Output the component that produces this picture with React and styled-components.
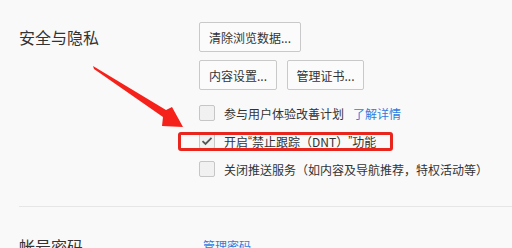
import React from "react";
import styled, { createGlobalStyle } from "styled-components";

const Global = createGlobalStyle`
  html, body {
    margin: 0;
    padding: 0;
    background: #f9f9f9;
    overflow: hidden;
  }
  body {
    font-family: "Noto Sans CJK SC", "Liberation Sans", sans-serif;
    color: #333;
  }
`;

const Page = styled.div`
  position: relative;
  width: 512px;
  height: 248px;
  overflow: hidden;
`;

const Section = styled.section`
  display: grid;
  grid-template-columns: 180px 1fr;
  margin-left: 19px;
  padding: ${(p) => p.$pad};
  border-bottom: ${(p) => (p.$divider ? "1px solid #e6e6e6" : "none")};
`;

const Title = styled.h3`
  margin: 0;
  font-size: 16px;
  font-weight: 400;
  line-height: 30px;
  color: #333;
`;

const Controls = styled.div`
  display: flex;
  flex-direction: column;
`;

const ButtonRow = styled.div`
  display: flex;
  gap: 10px;
  margin-bottom: 8px;
`;

const Button = styled.button`
  box-sizing: border-box;
  height: 30px;
  padding: 0;
  font-family: inherit;
  font-size: 12px;
  color: #333;
  white-space: nowrap;
  background: #fbfbfb;
  border: 1px solid #c9c9c9;
  border-radius: 2px;
  width: ${(p) => p.$w}px;
  text-align: center;
`;

const Options = styled.div`
  display: flex;
  flex-direction: column;
  margin-top: 1px;
`;

const Option = styled.label`
  position: relative;
  display: flex;
  align-items: center;
  height: 28px;
  font-size: 12px;
  color: #333;
  white-space: nowrap;
`;

const Box = styled.span`
  display: inline-flex;
  align-items: center;
  justify-content: center;
  width: 14px;
  height: 14px;
  border: 1px solid #c6c6c6;
  border-radius: 2px;
  background: #f1f1f1;
  margin-right: 9px;
`;

const Quote = styled.span`
  font-family: "Liberation Sans", sans-serif;
`;

const Link = styled.a`
  color: #2f7ce0;
  margin-left: 9px;
  text-decoration: none;
`;

const Highlight = styled.span`
  position: absolute;
  left: -21px;
  top: 5px;
  width: 209px;
  height: 13px;
  border: 3px solid #e8261d;
  border-radius: 3px;
  pointer-events: none;
`;

const PlainLink = styled.a`
  color: #2f7ce0;
  font-size: 12px;
  line-height: 30px;
  padding-left: 4px;
  text-decoration: none;
`;

const Arrow = styled.svg`
  position: absolute;
  left: 0;
  top: 0;
  pointer-events: none;
`;

function Check() {
  return (
    <svg width="12" height="10" viewBox="0 0 12 10">
      <path d="M1.5 5.2 L4.5 8 L10.5 1.8" fill="none" stroke="#555" strokeWidth="1.8" />
    </svg>
  );
}

export default function App() {
  return (
    <Page>
      <Global />
      <Section $pad="22px 0 23px 0" $divider>
        <Title>安全与隐私</Title>
        <Controls>
          <ButtonRow>
            <Button $w={102}>清除浏览数据...</Button>
          </ButtonRow>
          <ButtonRow>
            <Button $w={78}>内容设置...</Button>
            <Button $w={77}>管理证书...</Button>
          </ButtonRow>
          <Options>
            <Option>
              <Box />
              参与用户体验改善计划
              <Link href="#">了解详情</Link>
            </Option>
            <Option>
              <Highlight />
              <Box>
                <Check />
              </Box>
              开启<Quote>“</Quote>禁止跟踪（DNT）<Quote>”</Quote>功能
            </Option>
            <Option>
              <Box />
              关闭推送服务（如内容及导航推荐，特权活动等）
            </Option>
          </Options>
        </Controls>
      </Section>
      <Section $pad="24px 0 0 0">
        <Title>帐号密码</Title>
        <div>
          <PlainLink href="#">管理密码</PlainLink>
        </div>
      </Section>
      <Arrow width="512" height="248">
        <polygon
          points="93,66 166,110 172,107 183,127 162,126 163,117 94,69"
          fill="#f5221b"
        />
      </Arrow>
    </Page>
  );
}
